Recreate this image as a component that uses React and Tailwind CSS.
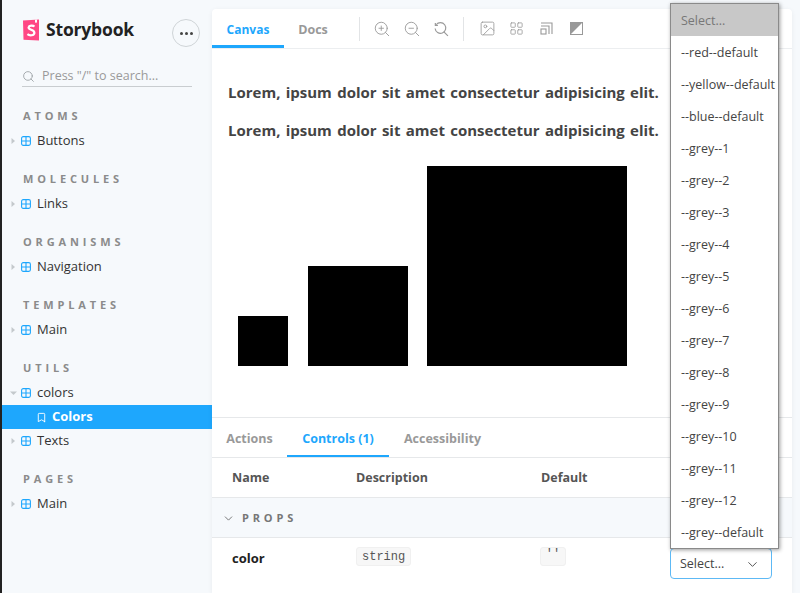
import React from "react";
import { ChevronDown, Search, ZoomIn, ZoomOut, Image, LayoutGrid, Bookmark } from "lucide-react";

const groups = [
  { title: "ATOMS", items: ["Buttons"] },
  { title: "MOLECULES", items: ["Links"] },
  { title: "ORGANISMS", items: ["Navigation"] },
  { title: "TEMPLATES", items: ["Main"] },
];

const options = [
  "--red--default",
  "--yellow--default",
  "--blue--default",
  "--grey--1",
  "--grey--2",
  "--grey--3",
  "--grey--4",
  "--grey--5",
  "--grey--6",
  "--grey--7",
  "--grey--8",
  "--grey--9",
  "--grey--10",
  "--grey--11",
  "--grey--12",
  "--grey--default",
];

const ComponentIcon = () => (
  <svg width="10" height="10" viewBox="0 0 10 10" fill="none" stroke="#1ea7fd" strokeWidth="1.1" className="shrink-0">
    <rect x="0.6" y="0.6" width="8.8" height="8.8" rx="1.6" />
    <path d="M5 0.6V9.4M0.6 5H9.4" />
  </svg>
);

const TreeRow = ({ label, open }) => (
  <div className="flex items-center h-6 pl-[8px]">
    {open ? (
      <svg width="7" height="6" viewBox="0 0 7 6" className="mr-[4px]">
        <path d="M0 1.5H7L3.5 5Z" fill="#c4c9cc" />
      </svg>
    ) : (
      <svg width="6" height="6" viewBox="0 0 6 6" className="mr-[5px]">
        <path d="M1.5 0V6L5 3Z" fill="#c4c9cc" />
      </svg>
    )}
    <ComponentIcon />
    <span className="ml-[6px] text-[13px] text-[#333]">{label}</span>
  </div>
);

const GroupTitle = ({ children }) => (
  <div className="pl-[21px] h-[19px] flex items-center text-[11px] font-bold tracking-[0.35em] text-[#8b8b8b]">
    {children}
  </div>
);

const Sidebar = () => (
  <aside className="w-[210px] shrink-0 bg-[#f6f9fc]">
    <div className="relative flex items-center pl-[20px] pt-[10px] h-[50px]">
      <svg width="18" height="22" viewBox="0 0 18 22" className="shrink-0">
        <path d="M1 1.5L17 0.5V21.5L1.5 20.8Z" fill="#ff4785" />
        <path d="M13 0.8L15 0.6V4L14 3.2L13 4Z" fill="#fff" />
        <path d="M12.5 7.5C11 6.3 7 6.2 6.6 8.4C6.2 11.2 12.6 10.4 12.4 14C12.2 16.8 7.5 16.8 5.4 15.2" fill="none" stroke="#fff" strokeWidth="2.2" />
      </svg>
      <span className="ml-[6px] text-[17.5px] leading-none font-bold text-[#222] tracking-[-0.01em]">Storybook</span>
      <div className="ml-auto mr-[12px] mt-[6px] w-[28px] h-[28px] rounded-full border border-[#cfd4d7] flex items-center justify-center gap-[2px]">
        <span className="w-[3px] h-[3px] rounded-full bg-[#444]" />
        <span className="w-[3px] h-[3px] rounded-full bg-[#444]" />
        <span className="w-[3px] h-[3px] rounded-full bg-[#444]" />
      </div>
    </div>
    <div className="ml-[20px] w-[170px] mt-[15px] h-[22px] pt-[2px] flex items-center border-b border-[#c9cdd0]">
      <Search size={13} strokeWidth={1.6} color="#9aa0a4" />
      <span className="ml-[7px] text-[12.5px] text-[#9a9a9a]">Press "/" to search...</span>
    </div>
    <div className="mt-[20px]">
      {groups.map((group) => (
        <div key={group.title} className="mb-[17px]">
          <GroupTitle>{group.title}</GroupTitle>
          <div className="mt-[3px]">
            {group.items.map((item) => (
              <TreeRow key={item} label={item} />
            ))}
          </div>
        </div>
      ))}
      <div className="mb-[17px]">
        <GroupTitle>UTILS</GroupTitle>
        <div className="mt-[3px]">
          <TreeRow label="colors" open />
          <div className="flex items-center h-6 pl-[34px] bg-[#1ea7fd]">
            <Bookmark size={11} strokeWidth={2} color="#fff" />
            <span className="ml-[5px] text-[13px] font-bold text-white">Colors</span>
          </div>
          <TreeRow label="Texts" />
        </div>
      </div>
      <GroupTitle>PAGES</GroupTitle>
      <div className="mt-[3px]">
        <TreeRow label="Main" />
      </div>
    </div>
  </aside>
);

const Toolbar = () => (
  <div className="flex items-center h-[40px] border-b border-[#eceef0] shrink-0">
    <div className="w-[72px] h-full flex items-center justify-center border-b-[3px] border-[#1ea7fd] pt-[5px] text-[12px] font-bold text-[#1ea7fd]">
      Canvas
    </div>
    <div className="w-[32px] ml-[13px] pt-[3px] text-[12.5px] font-bold text-[#999] text-center">Docs</div>
    <div className="ml-[30px] w-px h-[24px] bg-[#e2e4e6]" />
    <div className="ml-[13px] flex items-center gap-[12px] text-[#999]">
      <ZoomIn size={18} strokeWidth={1.2} />
      <ZoomOut size={18} strokeWidth={1.2} />
      <svg width="16" height="16" viewBox="0 0 15 15" fill="none" stroke="currentColor" strokeWidth="1.1">
        <path d="M3 3.5A5 5 0 1 1 2 7" />
        <path d="M2.2 1.8V4.2H4.6" />
        <path d="M10 10L14 14" />
      </svg>
    </div>
    <div className="ml-[14px] w-px h-[24px] bg-[#e2e4e6]" />
    <div className="ml-[15px] flex items-center gap-[13px] text-[#999]">
      <Image size={17} strokeWidth={1.2} />
      <LayoutGrid size={15} strokeWidth={1.3} />
      <svg width="13" height="13" viewBox="0 0 13 13" fill="none" stroke="currentColor" strokeWidth="1.1" className="ml-[3px]">
        <path d="M1 1H12V12" />
        <path d="M1 4H9V12" />
        <rect x="1" y="7" width="5" height="5" />
      </svg>
      <svg width="13" height="13" viewBox="0 0 13 13" className="ml-[4px]">
        <rect x="0.5" y="0.5" width="12" height="12" fill="#fff" stroke="#999" />
        <path d="M0.5 0.5H12.5L0.5 12.5Z" fill="#999" />
      </svg>
    </div>
  </div>
);

const Canvas = () => (
  <div className="h-[369px] shrink-0 pt-[32px] pl-[16px] border-b border-[#e6e8ea]">
    <p className="text-[15px] leading-[22px] font-bold text-[#444] whitespace-nowrap [word-spacing:1.4px]">Lorem, ipsum dolor sit amet consectetur adipisicing elit.</p>
    <p className="mt-[16px] text-[15px] leading-[22px] font-bold text-[#444] whitespace-nowrap [word-spacing:1.4px]">Lorem, ipsum dolor sit amet consectetur adipisicing elit.</p>
    <div className="mt-[25px] ml-[10px] flex items-end gap-[20px]">
      <div className="w-[50px] h-[50px] bg-black" />
      <div className="w-[100px] h-[100px] bg-black" />
      <div className="w-[200px] h-[200px] bg-black -ml-px" />
    </div>
  </div>
);

const Addons = () => (
  <div className="flex-1 min-h-0">
    <div className="flex h-[40px] border-b border-[#e6e8ea] text-[12.5px] font-bold">
      <div className="w-[75px] flex items-center justify-center pt-[3px] text-[#999]">Actions</div>
      <div className="w-[102px] flex items-center justify-center pt-[5px] text-[#1ea7fd] border-b-[2px] border-[#1ea7fd]">Controls (1)</div>
      <div className="ml-[15px] flex items-center pt-[3px] text-[#999]">Accessibility</div>
    </div>
    <div className="flex items-center h-[40px] pt-[2px] border-b border-[#e6e8ea] text-[12.5px] font-bold text-[#555]">
      <div className="w-[144px] pl-[20px]">Name</div>
      <div className="w-[185px]">Description</div>
      <div>Default</div>
    </div>
    <div className="flex items-center h-[40px] pt-[1px] bg-[#f6f9fc] border-b border-[#e6e8ea] pl-[10px]">
      <ChevronDown size={13} strokeWidth={1.6} color="#666" />
      <span className="ml-[7px] text-[11px] font-bold tracking-[0.35em] text-[#777]">PROPS</span>
    </div>
    <div className="flex items-start">
      <div className="w-[144px] pl-[20px] pt-[11px] text-[13px] font-bold text-[#222]">color</div>
      <div className="w-[184px] pt-[9px]">
        <code className="block w-fit h-[19px] leading-[18px] px-[5px] rounded-[3px] bg-[#f7f7f7] border border-[#f0f0f0] text-[12px] text-[#555] font-['Liberation_Mono',monospace]">
          string
        </code>
      </div>
      <div className="w-[130px] pt-[9px]">
        <code className="block w-[26px] h-[19px] leading-[12px] text-center rounded-[3px] bg-[#f7f7f7] border border-[#f0f0f0] text-[12px] text-[#555] font-['Liberation_Mono',monospace]">
          ''
        </code>
      </div>
      <div className="mt-[10px] w-[102px] h-[31px] pt-[1px] rounded-[4px] border border-[#5db9f5] flex items-center justify-between pl-[9px] pr-[11px] text-[12.5px] text-[#444]">
        <span className="pt-[1px]">Select...</span>
        <ChevronDown size={15} strokeWidth={1.6} color="#555" />
      </div>
    </div>
  </div>
);

const Dropdown = () => (
  <div className="absolute left-[670px] top-[3px] w-[109px] bg-white border border-[#8a8a8a] shadow-[1px_1px_4px_rgba(0,0,0,0.4)]">
    <div className="h-[32px] pl-[10px] pt-[3px] flex items-center bg-[#c8c8c8] text-[12.5px] text-[#777]">Select...</div>
    {options.map((option) => (
      <div key={option} className="h-[32px] pl-[10px] pt-[3px] flex items-center text-[12.5px] text-[#444] whitespace-nowrap overflow-hidden">
        {option}
      </div>
    ))}
  </div>
);

export default function App() {
  return (
    <div className="relative flex w-[800px] h-[593px] overflow-hidden bg-[#f6f9fc] font-['Open_Sans','Noto_Sans',sans-serif]">
      <div className="w-[2px] shrink-0 bg-[#222]" />
      <Sidebar />
      <main className="mt-[9px] w-[580px] shrink-0 flex flex-col bg-white rounded-t-[4px] shadow-[0_1px_5px_rgba(0,0,0,0.06)]">
        <Toolbar />
        <Canvas />
        <Addons />
      </main>
      <Dropdown />
    </div>
  );
}
